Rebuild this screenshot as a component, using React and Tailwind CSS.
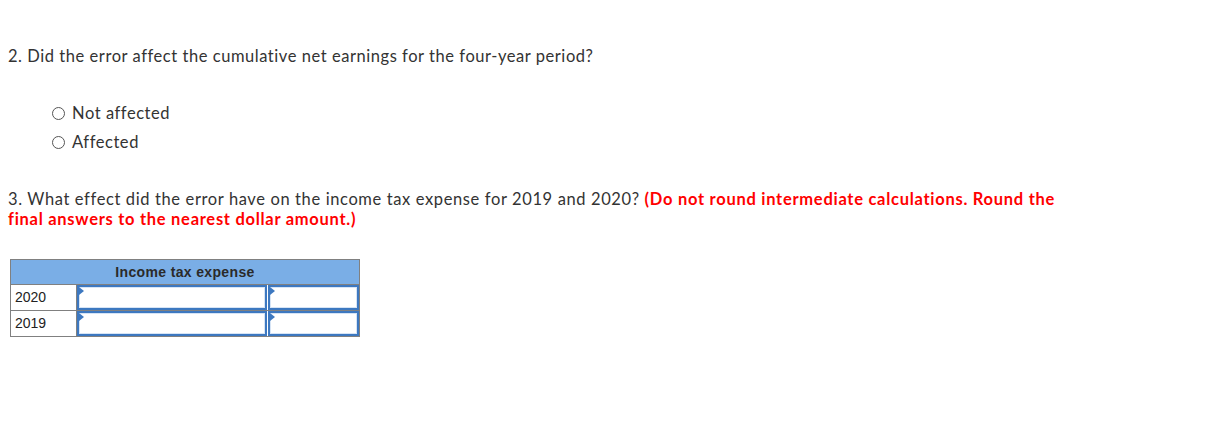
export default function App() {
  const font = { fontFamily: "Lato, 'Open Sans', sans-serif" };
  return (
    <div className="w-[1213px] h-[433px] bg-white text-[#333] relative" style={font}>
      <div className="pt-[45px] pl-[8px]">
        <p className="text-[16.5px] leading-[22px] tracking-[0.55px]">2. Did the error affect the cumulative net earnings for the four-year period?</p>
        <div className="mt-[35px] pl-[44px] flex flex-col gap-[7px]">
          {["Not affected", "Affected"].map((t) => (
            <label key={t} className="flex items-center gap-[7px] text-[16.5px] leading-[22px] tracking-[0.55px]">
              <span className="w-[13px] h-[13px] rounded-full border border-[#555] bg-white inline-block"></span>
              {t}
            </label>
          ))}
        </div>
        <p className="mt-[36px] text-[16.5px] leading-[20px] w-[1065px] tracking-[0.62px]">
          3. What effect did the error have on the income tax expense for 2019 and 2020?{" "}
          <b className="text-[#ff0000] font-bold tracking-[0.72px]">(Do not round intermediate calculations. Round the final answers to the nearest dollar amount.)</b>
        </p>
      </div>
      <div className="ml-[10px] mt-[30px] w-[350px] border border-[#808080]" style={{ fontFamily: "'Liberation Sans', Arial, sans-serif" }}>
        <div className="h-[25px] bg-[#7aaee6] border-b border-[#808080] flex items-center justify-center text-[14px] tracking-[0.35px] font-bold text-[#2a2a2a]">
          Income tax expense
        </div>
        {["2020", "2019"].map((y, i) => (
          <div key={y} className={`flex ${i === 0 ? "h-[26px] border-b border-[#808080]" : "h-[25px]"}`}>
            <div className="w-[66px] border-r border-[#808080] flex items-center pl-[4px] text-[14px] text-[#222]">{y}</div>
            <div className="relative w-[190px] border-2 border-[#3d78c0] bg-white shadow-[inset_0_0_0_1px_#d6e4f5]">
              <span className="absolute left-0 top-0 w-0 h-0 border-t-[4px] border-b-[4px] border-l-[5px] border-t-transparent border-b-transparent border-l-[#3d78c0]"></span>
            </div>
            <div className="relative flex-1 border-2 border-[#3d78c0] bg-white ml-[1px] shadow-[inset_0_0_0_1px_#d6e4f5]">
              <span className="absolute left-0 top-0 w-0 h-0 border-t-[4px] border-b-[4px] border-l-[5px] border-t-transparent border-b-transparent border-l-[#3d78c0]"></span>
            </div>
          </div>
        ))}
      </div>
    </div>
  );
}
